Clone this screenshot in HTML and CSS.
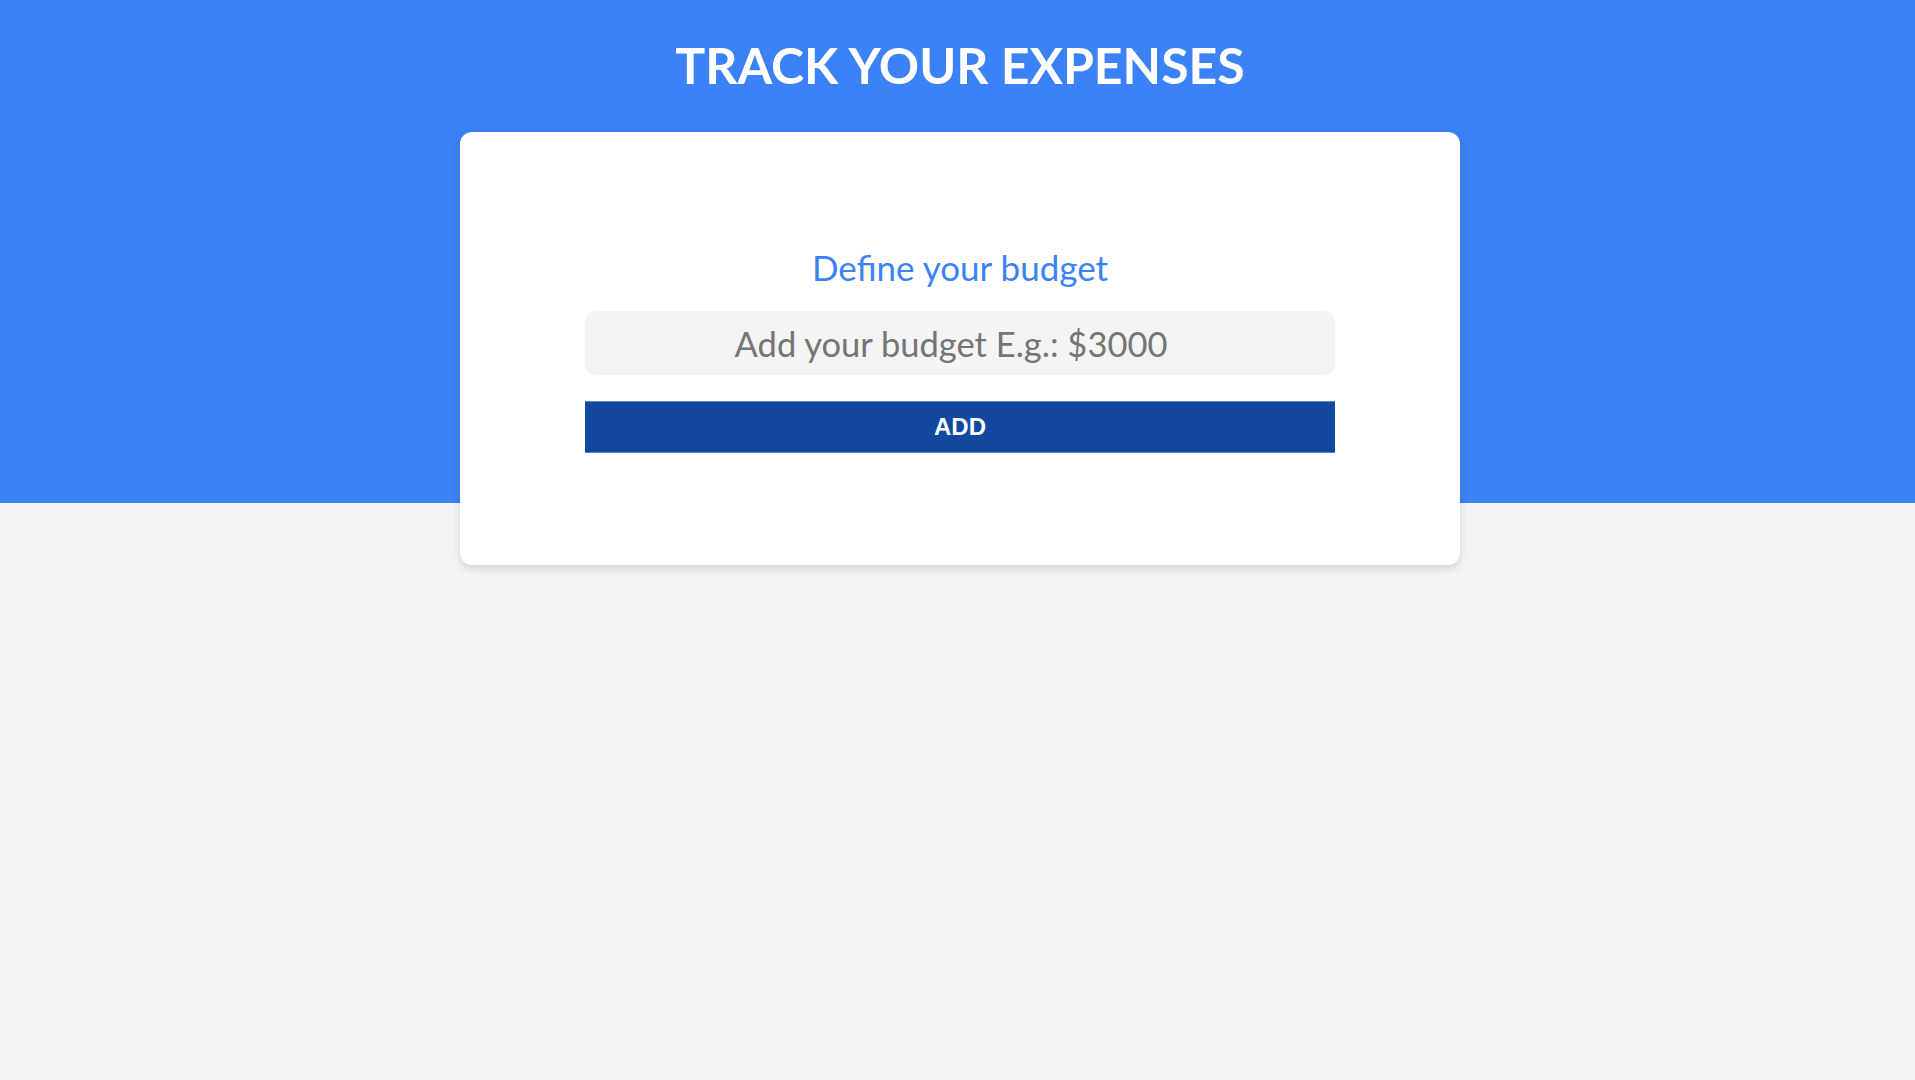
FILE: index.html
```html
<!DOCTYPE html>
<html lang="en">
<head>
<meta charset="utf-8">
<title>Track your expenses</title>
<link rel="stylesheet" href="styles.css">
</head>
<body>
<header class="hero">
  <h1 class="hero-title">TRACK YOUR EXPENSES</h1>
</header>
<main class="card">
  <form class="budget-form">
    <h2 class="budget-title">Define your budget</h2>
    <input class="budget-input" type="number" placeholder="Add your budget E.g.: $3000">
    <button class="budget-btn" type="button">ADD</button>
  </form>
</main>
</body>
</html>
```

FILE: styles.css
```css
* { box-sizing: border-box; }

html, body { height: 100%; }

body {
  margin: 0;
  padding: 0 0 0 5px;
  font-family: Lato, "Open Sans", sans-serif;
  background: linear-gradient(#3b82f6 0, #3b82f6 503px, #f4f4f4 503px, #f4f4f4 100%);
  min-height: 1080px;
}

.hero {
  padding-top: 36px;
}

.hero-title {
  margin: 0;
  text-align: center;
  color: #ffffff;
  font-size: 50px;
  font-weight: 700;
  line-height: 58px;
}

.card {
  width: 1000px;
  margin: 38px auto 0;
  background: #ffffff;
  border-radius: 12px;
  box-shadow: 0 4px 8px rgba(0, 0, 0, 0.14);
  padding: 111px 125px 112px;
}

.budget-form {
  display: flex;
  flex-direction: column;
  gap: 25px;
}

.budget-title {
  margin: 3px 0 -3px;
  text-align: center;
  color: #3b82f6;
  font-size: 35px;
  font-weight: 400;
  line-height: 43px;
}

.budget-input {
  height: 64px;
  width: 100%;
  border: none;
  border-radius: 10px;
  background: #f4f4f4;
  font-family: Lato, sans-serif;
  font-size: 34.5px;
  text-align: center;
  padding: 0 18px 0 0;
  color: #333;
  outline: none;
}

.budget-input::placeholder {
  color: #757575;
  opacity: 1;
}

.budget-input::-webkit-outer-spin-button,
.budget-input::-webkit-inner-spin-button {
  -webkit-appearance: none;
  margin: 0;
}

.budget-btn {
  height: 52px;
  width: 100%;
  margin-top: 1px;
  border: none;
  border-top: 1px solid #5a84c6;
  border-bottom: 1px solid #5a84c6;
  background: #1248a0;
  color: #ffffff;
  font-family: "Liberation Sans", Arial, sans-serif;
  font-weight: 700;
  font-size: 24px;
  cursor: pointer;
}
```
